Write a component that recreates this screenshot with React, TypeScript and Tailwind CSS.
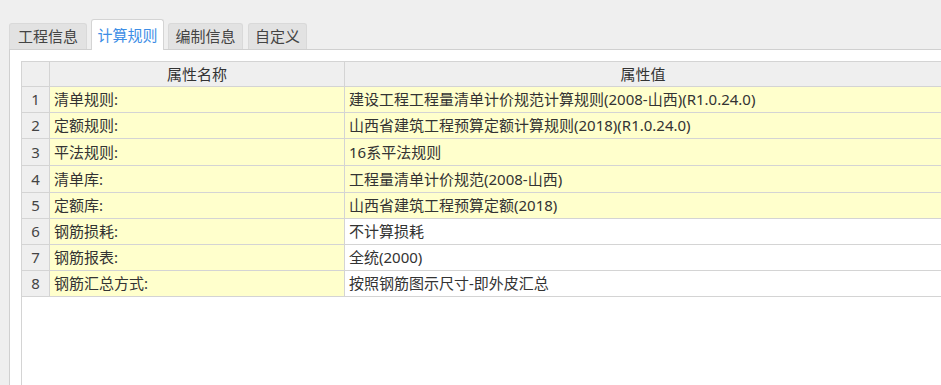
const tabs = [
  { label: '工程信息', w: 'w-[78px]', ml: 'ml-0' },
  { label: '计算规则', w: 'w-[73px]', ml: 'ml-[4px]', active: true },
  { label: '编制信息', w: 'w-[75px]', ml: 'ml-[4px]' },
  { label: '自定义', w: 'w-[59px]', ml: 'ml-[5px]' },
]

const rows = [
  { name: '清单规则:', value: '建设工程工程量清单计价规范计算规则(2008-山西)(R1.0.24.0)', locked: true, h: 'h-[26px]' },
  { name: '定额规则:', value: '山西省建筑工程预算定额计算规则(2018)(R1.0.24.0)', locked: true, h: 'h-[26px]' },
  { name: '平法规则:', value: '16系平法规则', locked: true, h: 'h-[27px]' },
  { name: '清单库:', value: '工程量清单计价规范(2008-山西)', locked: true, h: 'h-[27px]' },
  { name: '定额库:', value: '山西省建筑工程预算定额(2018)', locked: true, h: 'h-[26px]' },
  { name: '钢筋损耗:', value: '不计算损耗', h: 'h-[26px]' },
  { name: '钢筋报表:', value: '全统(2000)', h: 'h-[26px]' },
  { name: '钢筋汇总方式:', value: '按照钢筋图示尺寸-即外皮汇总', h: 'h-[26px]' },
]

export default function App() {
  return (
    <div className="w-[941px] h-[385px] overflow-hidden bg-[#efefef] pt-[19px] text-[15px] text-[#333] font-['Noto_Sans','Noto_Sans_CJK_SC',sans-serif]">
      {/* tab strip */}
      <div className="flex items-end pl-[9px] h-[30px]">
        {tabs.map((t) =>
          t.active ? (
            <div
              key={t.label}
              className={`${t.w} ${t.ml} relative z-10 -mb-px h-[31px] flex items-center justify-center rounded-t-[3px] border border-b-0 border-[#d4d4d4] bg-white text-[#3d8ee6]`}
            >
              {t.label}
            </div>
          ) : (
            <div
              key={t.label}
              className={`${t.w} ${t.ml} h-[26px] flex items-center justify-center rounded-t-[3px] border border-b-0 border-[#d9d9d9] bg-[#e2e2e2] text-[#444]`}
            >
              {t.label}
            </div>
          )
        )}
      </div>

      {/* panel */}
      <div className="ml-[9px] h-[336px] border-t border-l border-[#d0d0d0] bg-white pt-[11px] pl-[11px] flex flex-col">
        <div className="flex-1 border-t border-l border-[#d4d4d4]">
          {/* header */}
          <div className="grid grid-cols-[28px_295px_1fr] h-[25px] bg-[#efefef]">
            <div className="border-r border-b border-[#d4d4d4]" />
            <div className="border-r border-b border-[#d4d4d4] flex items-center justify-center leading-none">属性名称</div>
            <div className="border-b border-[#d4d4d4] flex items-center justify-center leading-none">属性值</div>
          </div>
          {rows.map((r, i) => (
            <div key={i} className={`grid grid-cols-[28px_295px_1fr] ${r.h}`}>
              <div className="border-r border-b border-[#d4d4d4] bg-[#efefef] flex items-center justify-center text-[#444] leading-none">
                {i + 1}
              </div>
              <div className="border-r border-b border-[#d4d4d4] bg-[#ffffcc] flex items-center pl-[4px] leading-none">{r.name}</div>
              <div className={`border-b border-[#d4d4d4] flex items-center pl-[4px] leading-none ${r.locked ? 'bg-[#ffffcc]' : 'bg-white'}`}>
                {r.value}
              </div>
            </div>
          ))}
        </div>
      </div>
    </div>
  )
}
